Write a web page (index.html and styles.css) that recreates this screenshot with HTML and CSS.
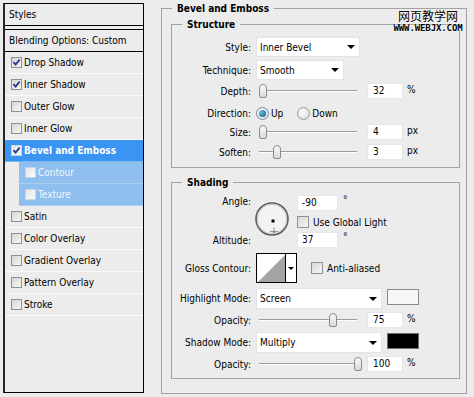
FILE: index.html
```html
<!DOCTYPE html>
<html>
<head>
<meta charset="utf-8">
<title>Layer Style - Bevel and Emboss</title>
<link rel="stylesheet" href="styles.css">
</head>
<body>
<div class="dialog">
  <div class="styles-panel">
    <div class="sp-head">Styles</div>
    <div class="sp-blend">Blending Options: Custom</div>
    <ul class="sp-list">
      <li class="sp-item"><span class="cb checked"><svg viewBox="0 0 9 9"><path d="M1.5 4.2 3.6 6.6 7.6 1.6"/></svg></span>Drop Shadow</li>
      <li class="sp-item"><span class="cb checked"><svg viewBox="0 0 9 9"><path d="M1.5 4.2 3.6 6.6 7.6 1.6"/></svg></span>Inner Shadow</li>
      <li class="sp-item"><span class="cb"></span>Outer Glow</li>
      <li class="sp-item"><span class="cb"></span>Inner Glow</li>
      <li class="sp-item active"><span class="cb checked"><svg viewBox="0 0 9 9"><path d="M1.5 4.2 3.6 6.6 7.6 1.6"/></svg></span>Bevel and Emboss</li>
      <li class="sp-item sub"><span class="cb"></span>Contour</li>
      <li class="sp-item sub"><span class="cb"></span>Texture</li>
      <li class="sp-item"><span class="cb"></span>Satin</li>
      <li class="sp-item"><span class="cb"></span>Color Overlay</li>
      <li class="sp-item"><span class="cb"></span>Gradient Overlay</li>
      <li class="sp-item"><span class="cb"></span>Pattern Overlay</li>
      <li class="sp-item"><span class="cb"></span>Stroke</li>
    </ul>
  </div>

  <div class="main">
    <fieldset class="group outer">
      <legend>Bevel and Emboss</legend>

      <fieldset class="group structure">
        <legend>Structure</legend>
        <div class="row r-style">
          <span class="lbl">Style:</span>
          <div class="select w-style"><span>Inner Bevel</span><span class="arrow"></span></div>
        </div>
        <div class="row r-tech">
          <span class="lbl">Technique:</span>
          <div class="select w-tech"><span>Smooth</span><span class="arrow"></span></div>
        </div>
        <div class="row r-depth">
          <span class="lbl">Depth:</span>
          <div class="slider"><span class="track"></span><span class="thumb" style="left:3px"></span></div>
          <div class="num">32</div><span class="unit">%</span>
        </div>
        <div class="row r-dir">
          <span class="lbl">Direction:</span>
          <span class="radio on"></span><span class="rtext">Up</span>
          <span class="radio down"></span><span class="rtext">Down</span>
        </div>
        <div class="row r-size">
          <span class="lbl">Size:</span>
          <div class="slider"><span class="track"></span><span class="thumb" style="left:3px"></span></div>
          <div class="num">4</div><span class="unit">px</span>
        </div>
        <div class="row r-soften">
          <span class="lbl">Soften:</span>
          <div class="slider"><span class="track"></span><span class="thumb" style="left:17px"></span></div>
          <div class="num">3</div><span class="unit">px</span>
        </div>
      </fieldset>

      <fieldset class="group shading">
        <legend>Shading</legend>
        <div class="angle-grid">
          <span class="lbl lbl-angle">Angle:</span>
          <div class="dial">
            <svg width="34" height="34" viewBox="0 0 34 34">
              <circle cx="17" cy="17" r="16" fill="#f3f3f3" stroke="#5c5c5c" stroke-width="1.6"/>
              <circle cx="17" cy="17" r="14.6" fill="none" stroke="#c9c9c9" stroke-width="1"/>
              <rect x="16.5" y="17.5" width="3" height="3" fill="#000"/>
              <path d="M19 26v7M15.5 29.5h7" stroke="#333" stroke-width="1" stroke-dasharray="1 1"/>
            </svg>
          </div>
          <div class="cell">
            <div class="num w-angle">-90</div><span class="deg">°</span>
          </div>
          <div class="cell">
            <span class="cb2"></span><span class="cbtext">Use Global Light</span>
          </div>
          <span class="lbl">Altitude:</span>
          <div class="cell">
            <div class="num w-angle">37</div><span class="deg">°</span>
          </div>
        </div>

        <div class="row r-gloss">
          <span class="lbl">Gloss Contour:</span>
          <div class="contour">
            <svg class="contour-prev" width="28" height="28" viewBox="0 0 28 28">
              <rect width="28" height="28" fill="#fff"/>
              <path d="M1 28 28 1V28Z" fill="#a3a3a3"/>
            </svg>
            <span class="contour-drop"><span class="arrow small"></span></span>
          </div>
          <span class="cb2 anti"></span><span class="cbtext">Anti-aliased</span>
        </div>

        <div class="row r-hmode">
          <span class="lbl">Highlight Mode:</span>
          <div class="select w-mode"><span>Screen</span><span class="arrow"></span></div>
          <span class="swatch light"></span>
        </div>
        <div class="row r-op1">
          <span class="lbl">Opacity:</span>
          <div class="slider"><span class="track"></span><span class="thumb" style="left:73px"></span></div>
          <div class="num">75</div><span class="unit">%</span>
        </div>
        <div class="row r-smode">
          <span class="lbl">Shadow Mode:</span>
          <div class="select w-mode"><span>Multiply</span><span class="arrow"></span></div>
          <span class="swatch dark"></span>
        </div>
        <div class="row r-op2">
          <span class="lbl">Opacity:</span>
          <div class="slider"><span class="track"></span><span class="thumb" style="left:98px"></span></div>
          <div class="num">100</div><span class="unit">%</span>
        </div>
      </fieldset>
    </fieldset>
  </div>

  <div class="watermark">
    <div class="wm-cn">网页教学网</div>
    <div class="wm-en">WWW.WEBJX.COM</div>
  </div>
</div>
</body>
</html>
```

FILE: styles.css
```css
* { box-sizing: border-box; }
html, body { margin: 0; padding: 0; }
body {
  width: 474px;
  height: 397px;
  overflow: hidden;
  background: #ececec;
  color: #000;
  font-family: "DejaVu Sans Condensed", "DejaVu Sans", "Liberation Sans", sans-serif;
  font-size: 10px;
}
.dialog {
  position: relative;
  display: flex;
  align-items: flex-start;
  padding: 2px 0 0 3px;
  height: 397px;
}

/* ---------- left styles list ---------- */
.styles-panel {
  flex: none;
  width: 141px;
  height: 390px;
  margin-top: 1px;
  border: 1px solid #000;
  border-left: 2px solid #262626;
  background: #ececec;
}
.sp-head {
  height: 22px;
  line-height: 21px;
  padding-left: 4px;
  border-bottom: 1px solid #000;
}
.sp-blend {
  margin-top: 3px;
  height: 23px;
  line-height: 21px;
  padding-left: 4px;
  border-top: 1px solid #000;
  border-bottom: 1px solid #000;
}
.sp-list { list-style: none; margin: 0; padding: 0; }
.sp-item {
  display: flex;
  align-items: center;
  height: 22px;
  padding-left: 6px;
  border-bottom: 1px solid #fafafa;
}
.sp-item.active {
  background: #3994f2;
  color: #fff;
  font-weight: bold;
  border-bottom-color: #79b6f0;
}
.sp-item.sub {
  margin-left: 14px;
  background: #8fbfee;
  color: #f2f7ff;
  border-bottom-color: #a9cff3;
}
.cb {
  flex: none;
  display: flex;
  align-items: center;
  justify-content: center;
  width: 11px;
  height: 11px;
  margin-right: 2px;
  border: 1px solid #8d9096;
  background: linear-gradient(135deg, #d6d6d2, #f6f6f4);
}
.sp-item.active .cb,
.sp-item.sub .cb {
  border-color: #c4d6e8;
  background: linear-gradient(135deg, #e4e4e4, #fbfbfb);
}
.cb svg { width: 9px; height: 9px; }
.cb path { fill: none; stroke: #2b3790; stroke-width: 1.8; }

/* ---------- right area ---------- */
.main {
  flex: none;
  width: 306px;
  margin-left: 17px;
}
.group {
  margin: 0;
  padding: 0;
  min-width: 0;
  border: 1px solid #a2a2a2;
}
.group > legend {
  padding: 0 5px;
  height: 13px;
  line-height: 13px;
  font-weight: bold;
}
.outer { padding: 3px 6px 14px 9px; }
.outer > legend { margin-left: 1px; }
.structure { padding: 6px 0 7px 0; }
.structure > legend { margin-left: 10px; }
.shading { margin-top: 8px; padding: 5px 0 6px 0; }
.shading > legend { margin-left: 10px; }

.row { display: flex; align-items: center; }
.lbl {
  flex: none;
  width: 84px;
  padding-right: 5px;
  text-align: right;
}

.r-style { height: 20px; }
.r-tech { height: 20px; margin-top: 3px; }
.r-depth { height: 16px; margin-top: 3px; }
.r-dir { height: 18px; margin-top: 5px; }
.r-size { height: 16px; margin-top: 2px; }
.r-soften { height: 16px; margin-top: 4px; }

.select {
  display: flex;
  align-items: center;
  height: 100%;
  padding-left: 3px;
  background: #fff;
  border: 1px solid #e3e3e3;
}
.w-style { width: 104px; }
.w-tech { width: 88px; }
.w-mode { width: 126px; }
.arrow {
  margin-left: auto;
  margin-right: 4px;
  width: 0;
  height: 0;
  border-left: 4px solid transparent;
  border-right: 4px solid transparent;
  border-top: 4px solid #000;
}
.arrow.small {
  margin: 0;
  border-left-width: 3px;
  border-right-width: 3px;
  border-top-width: 3px;
}

.slider {
  position: relative;
  flex: none;
  width: 104px;
  height: 16px;
}
.track {
  position: absolute;
  left: 3px;
  right: 3px;
  top: 7px;
  height: 2px;
  border-top: 1px solid #9c9c9c;
  border-bottom: 1px solid #fdfdfd;
}
.thumb {
  position: absolute;
  top: 1px;
  width: 8px;
  height: 14px;
  border: 1px solid #8c8c8c;
  border-radius: 4px 4px 2px 2px;
  background: linear-gradient(#fbfbfb, #d9d9d9);
}
.num {
  flex: none;
  width: 36px;
  height: 16px;
  line-height: 14px;
  margin-left: 7px;
  padding-left: 5px;
  background: #fff;
  border: 1px solid #e6e6e6;
}
.unit { margin-left: 4px; align-self: flex-start; line-height: 13px; }

.radio {
  flex: none;
  display: flex;
  align-items: center;
  justify-content: center;
  width: 13px;
  height: 13px;
  border-radius: 50%;
  border: 1px solid #7d8c9b;
  background: radial-gradient(circle at 40% 40%, #ffffff, #d4d4d4);
}
.radio.on::after {
  content: "";
  width: 7px;
  height: 7px;
  border-radius: 50%;
  background: radial-gradient(circle at 35% 35%, #66b8e6, #0b5689);
}
.radio.down { margin-left: 14px; border-color: #9a9a9a; }
.rtext { margin-left: 2px; }

/* shading */
.angle-grid {
  display: grid;
  grid-template-columns: 84px 41px auto;
  grid-template-rows: 18px 20px 16px;
  align-items: center;
}
.lbl-angle { align-self: start; padding-top: 2px; }
.dial {
  grid-column: 2;
  grid-row: 1 / 4;
  align-self: start;
  margin-top: 8px;
  margin-left: -1px;
  width: 34px;
  height: 34px;
}
.dial svg { display: block; }
.cell { display: flex; align-items: center; grid-column: 3; }
.w-angle { width: 41px; margin-left: 0; padding-left: 4px; }
.deg { margin-left: 5px; align-self: flex-start; line-height: 10px; }
.cb2 {
  flex: none;
  width: 12px;
  height: 12px;
  border: 1px solid #8d9096;
  background: linear-gradient(135deg, #d6d6d2, #f6f6f4);
}
.cbtext { margin-left: 4px; }
.cb2.anti { margin-left: 14px; }

.r-gloss { height: 30px; margin-top: 5px; }
.contour {
  flex: none;
  display: flex;
  width: 41px;
  height: 30px;
  border: 1px solid #000;
  background: #fff;
}
.contour-prev { display: block; flex: none; }
.contour-drop {
  flex: 1;
  display: flex;
  align-items: center;
  justify-content: center;
  border-left: 1px solid #000;
}

.r-hmode { height: 21px; margin-top: 5px; }
.r-op1 { height: 16px; margin-top: 3px; }
.r-smode { height: 21px; margin-top: 4px; }
.r-op2 { height: 16px; margin-top: 3px; }
.swatch {
  flex: none;
  width: 32px;
  height: 16px;
  margin-left: 5px;
  align-self: flex-start;
  margin-top: 1px;
  border: 1px solid #8a8a8a;
}
.swatch.light { background: #f7f7f7; }
.swatch.dark { background: #000; border-color: #6f6f6f; }

/* watermark */
.watermark {
  position: absolute;
  left: 392px;
  top: 8px;
  width: 72px;
  text-align: center;
  text-shadow: 0 0 2px #fff, 0 0 2px #fff;
}
.wm-cn {
  font-family: "Noto Sans CJK SC", sans-serif;
  font-size: 12px;
  line-height: 15px;
  letter-spacing: 0;
}
.wm-en {
  font-family: "DejaVu Sans Mono", "Liberation Mono", monospace;
  font-weight: bold;
  font-size: 9px;
  line-height: 10px;
  letter-spacing: -0.1px;
}
```
